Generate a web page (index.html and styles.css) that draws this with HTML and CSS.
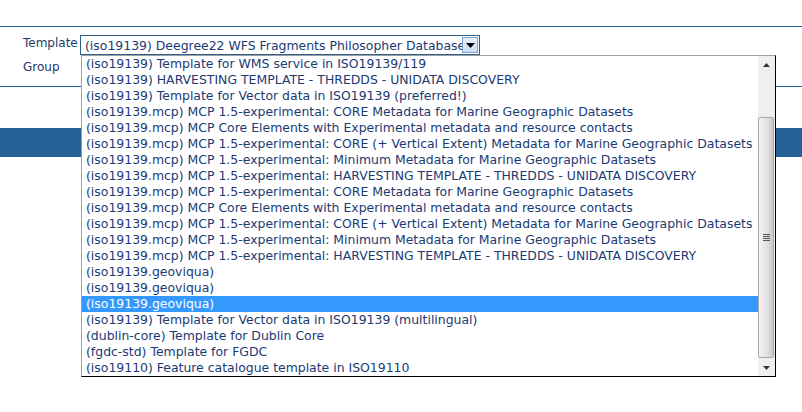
FILE: index.html
```html
<!DOCTYPE html>
<html>
<head>
<meta charset="utf-8">
<link rel="stylesheet" href="styles.css">
</head>
<body>
<div class="page">
  <div class="top-space"></div>
  <div class="form">
    <div class="row">
      <span class="label">Template</span>
      <div class="select">
        <span class="select-text">(iso19139) Deegree22 WFS Fragments Philosopher Database</span>
        <span class="select-btn"><svg width="9" height="5" viewBox="0 0 9 5"><polygon points="0,0 9,0 4.5,5" fill="#000"/></svg></span>
      </div>
    </div>
    <div class="row row-group">
      <span class="label">Group</span>
    </div>
  </div>
  <div class="gap"></div>
  <div class="band"></div>

  <div class="dropdown">
    <ul class="options">
      <li>(iso19139) Template for WMS service in ISO19139/119</li>
      <li>(iso19139) HARVESTING TEMPLATE - THREDDS - UNIDATA DISCOVERY</li>
      <li>(iso19139) Template for Vector data in ISO19139 (preferred!)</li>
      <li>(iso19139.mcp) MCP 1.5-experimental: CORE Metadata for Marine Geographic Datasets</li>
      <li>(iso19139.mcp) MCP Core Elements with Experimental metadata and resource contacts</li>
      <li>(iso19139.mcp) MCP 1.5-experimental: CORE (+ Vertical Extent) Metadata for Marine Geographic Datasets</li>
      <li>(iso19139.mcp) MCP 1.5-experimental: Minimum Metadata for Marine Geographic Datasets</li>
      <li>(iso19139.mcp) MCP 1.5-experimental: HARVESTING TEMPLATE - THREDDS - UNIDATA DISCOVERY</li>
      <li>(iso19139.mcp) MCP 1.5-experimental: CORE Metadata for Marine Geographic Datasets</li>
      <li>(iso19139.mcp) MCP Core Elements with Experimental metadata and resource contacts</li>
      <li>(iso19139.mcp) MCP 1.5-experimental: CORE (+ Vertical Extent) Metadata for Marine Geographic Datasets</li>
      <li>(iso19139.mcp) MCP 1.5-experimental: Minimum Metadata for Marine Geographic Datasets</li>
      <li>(iso19139.mcp) MCP 1.5-experimental: HARVESTING TEMPLATE - THREDDS - UNIDATA DISCOVERY</li>
      <li>(iso19139.geoviqua)</li>
      <li>(iso19139.geoviqua)</li>
      <li class="selected">(iso19139.geoviqua)</li>
      <li>(iso19139) Template for Vector data in ISO19139 (multilingual)</li>
      <li>(dublin-core) Template for Dublin Core</li>
      <li>(fgdc-std) Template for FGDC</li>
      <li>(iso19110) Feature catalogue template in ISO19110</li>
    </ul>
    <div class="scrollbar">
      <div class="arrow up"><svg width="7" height="4" viewBox="0 0 7 4"><polygon points="3.5,0 7,4 0,4" fill="#333"/></svg></div>
      <div class="track">
        <div class="thumb"><span class="grip"></span></div>
      </div>
      <div class="arrow down"><svg width="7" height="4" viewBox="0 0 7 4"><polygon points="0,0 7,0 3.5,4" fill="#333"/></svg></div>
    </div>
  </div>
</div>
</body>
</html>
```

FILE: styles.css
```css
html, body {
  margin: 0;
  padding: 0;
  background: #fff;
}
body {
  font-family: "DejaVu Sans", Verdana, sans-serif;
}
.page {
  position: relative;
  width: 802px;
  height: 412px;
  overflow: hidden;
}
.top-space {
  height: 26px;
}
.form {
  border-top: 1px solid #2a6496;
  border-bottom: 1px solid #2a6496;
  height: 59px;
  box-sizing: content-box;
  padding-left: 23px;
}
.row {
  display: flex;
  align-items: flex-start;
  height: 24px;
}
.row:first-child {
  margin-top: 8px;
}
.label {
  width: 57px;
  font-size: 12px;
  line-height: 16px;
  color: #24386a;
}
.select {
  position: relative;
  width: 400px;
  height: 20px;
  box-sizing: border-box;
  border: 1px solid #2c5f8e;
  display: flex;
  align-items: center;
  background: #fff;
}
.select-text {
  flex: 1;
  font-size: 12.45px;
  color: #1b3a73;
  white-space: nowrap;
  overflow: hidden;
  padding-left: 4px;
}
.select-btn {
  width: 16px;
  height: 16px;
  margin-right: 1px;
  box-sizing: border-box;
  border: 1px solid #7aa3cf;
  background: linear-gradient(#e6f0fb, #c8dcf3);
  display: flex;
  align-items: center;
  justify-content: center;
}
.gap {
  height: 41px;
}
.band {
  height: 29px;
  background: #266195;
}
.dropdown {
  position: absolute;
  left: 81px;
  top: 55px;
  width: 695px;
  height: 322px;
  box-sizing: border-box;
  border-top: 1px solid #a0a0a0;
  border-left: 1px solid #a0a0a0;
  border-right: 1px solid #000;
  border-bottom: 1px solid #000;
  background: #fff;
  display: flex;
}
.options {
  list-style: none;
  margin: 0;
  padding: 0;
  flex: 1;
  overflow: hidden;
}
.options li {
  height: 16px;
  line-height: 16px;
  font-size: 12.45px;
  color: #1b3a73;
  padding-left: 4px;
  white-space: nowrap;
}
.options li.selected {
  background: #3399ff;
  color: #fff;
}
.scrollbar {
  width: 17px;
  background: #efefef;
  display: flex;
  flex-direction: column;
}
.arrow {
  height: 17px;
  display: flex;
  align-items: center;
  justify-content: center;
}
.track {
  flex: 1;
  padding: 44px 0 1px;
  display: flex;
}
.thumb {
  flex: 1;
  margin-right: 1px;
  border: 1px solid #a8a8a8;
  border-radius: 2px;
  background: linear-gradient(to right, #f4f4f4, #e0e0e0 60%, #c8c8c8);
  display: flex;
  align-items: center;
  justify-content: center;
}
.grip {
  width: 7px;
  height: 7px;
  background: repeating-linear-gradient(#555 0 1px, transparent 1px 2px);
}
```
